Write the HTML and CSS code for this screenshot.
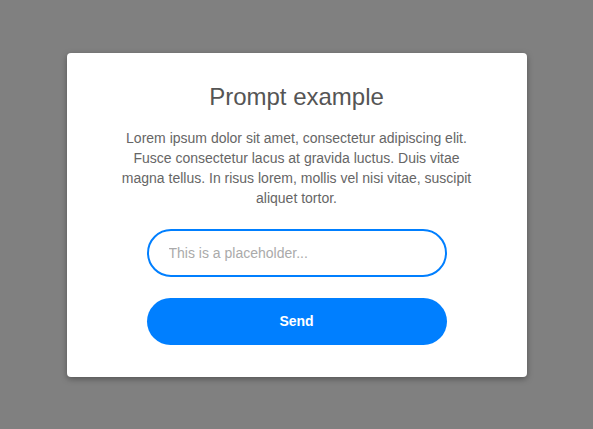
FILE: index.html
```html
<!DOCTYPE html>
<html>
<head>
<meta charset="utf-8">
<link rel="stylesheet" href="styles.css">
</head>
<body>
<div class="overlay">
  <div class="card">
    <h1 class="title">Prompt example</h1>
    <p class="text">Lorem ipsum dolor sit amet, consectetur adipiscing elit. Fusce consectetur lacus at gravida luctus. Duis vitae magna tellus. In risus lorem, mollis vel nisi vitae, suscipit aliquet tortor.</p>
    <input class="field" type="text" placeholder="This is a placeholder...">
    <button class="send">Send</button>
  </div>
</div>
</body>
</html>
```
FILE: styles.css
```css
html, body {
  margin: 0;
  padding: 0;
  height: 100%;
}
body {
  background: #808080;
  font-family: "Liberation Sans", Arial, sans-serif;
}
.overlay {
  height: 100%;
  display: flex;
  align-items: center;
  justify-content: center;
}
.card {
  width: 460px;
  height: 324px;
  box-sizing: border-box;
  background: #fff;
  border-radius: 4px;
  box-shadow: 0 2px 6px rgba(0,0,0,0.35);
  padding: 30px 0 32px;
  display: flex;
  flex-direction: column;
  align-items: center;
}
.title {
  margin: 0;
  font-size: 24px;
  line-height: 28px;
  font-weight: normal;
  color: #555;
}
.text {
  margin: 17px 0 0;
  width: 360px;
  font-size: 14px;
  line-height: 20.3px;
  color: #666;
  text-align: center;
}
.field {
  margin-top: 20px;
  width: 300px;
  height: 48px;
  box-sizing: border-box;
  border: 2px solid #007fff;
  border-radius: 24px;
  padding: 0 20px;
  font-family: inherit;
  font-size: 14px;
  color: #333;
  outline: none;
}
.field::placeholder {
  color: #aaa;
}
.send {
  margin-top: 21px;
  width: 300px;
  height: 47px;
  border: none;
  border-radius: 24px;
  background: #007fff;
  color: #fff;
  font-family: inherit;
  font-size: 14px;
  font-weight: bold;
}
```
